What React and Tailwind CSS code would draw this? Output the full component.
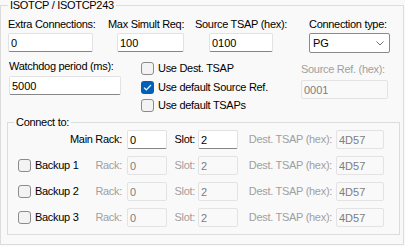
import React from "react";

// little WinForms-ish controls
function TextBox({ value, width, disabled = false }) {
  return (
    <input
      readOnly
      disabled={disabled}
      defaultValue={value}
      style={{ width }}
      className={
        disabled
          ? "h-[19px] rounded-[2px] border border-[#e3e3e3] bg-[#f9f9f9] pl-[2px] text-[11px] text-[#7d7d7d] outline-none"
          : "h-[19px] rounded-[2px] border border-[#e2e2e2] border-b-[#868686] bg-white pl-[2px] text-[11px] text-black outline-none"
      }
    />
  );
}

function CheckBox({ checked = false }) {
  if (checked) {
    return (
      <span className="flex h-[13px] w-[13px] shrink-0 items-center justify-center rounded-[3px] bg-[#005fb8]">
        <svg width="9" height="7" viewBox="0 0 9 7" fill="none">
          <path d="M1 3.6 L3.3 5.8 L8 1" stroke="white" strokeWidth="1.2" />
        </svg>
      </span>
    );
  }
  return (
    <span className="h-[13px] w-[13px] shrink-0 rounded-[3px] border border-[#8b8b8b] bg-[#f3f3f3]" />
  );
}

function CheckRow({ label, checked }) {
  return (
    <div className="flex h-[13px] items-center gap-[4px]">
      <CheckBox checked={checked} />
      <span className="leading-[13px] tracking-[-0.3px]">{label}</span>
    </div>
  );
}

function RackRow({ backup, label, enabled }) {
  const lbl = enabled ? "text-black" : "text-[#a0a0a0]";
  return (
    <div className="flex h-[19px] items-center">
      <div className="flex w-[113px] items-center justify-between pl-[4px] pr-[5px]">
        {backup ? (
          <div className="flex items-center gap-[4px]">
            <CheckBox />
            <span className="leading-[13px] tracking-[-0.3px]">{backup}</span>
          </div>
        ) : (
          <span />
        )}
        <span className={`leading-[13px] tracking-[-0.3px] ${lbl}`}>{label}</span>
      </div>
      <TextBox value="0" width={40} disabled={!enabled} />
      <div className="flex w-[31px] justify-end pr-[3px]">
        <span className={`leading-[13px] tracking-[-0.3px] ${lbl}`}>Slot:</span>
      </div>
      <TextBox value="2" width={40} disabled={!enabled} />
      <div className="flex w-[98px] justify-end pr-[4px]">
        <span className="leading-[13px] tracking-[-0.3px] text-[#a0a0a0]">Dest. TSAP (hex):</span>
      </div>
      <TextBox value="4D57" width={48} disabled />
    </div>
  );
}

export default function App() {
  return (
    <div className="h-[246px] w-[405px] overflow-hidden bg-[#f9f9f9] font-['Liberation_Sans',Arial,sans-serif] text-[11px] text-black">
      <fieldset className="w-[404px] border border-[#dcdcdc] pb-[9px] pl-[7px]">
        <legend className="px-[2px] leading-[10px] tracking-[-0.3px]">ISOTCP / ISOTCP243</legend>

        {/* top row */}
        <div className="mt-[8px] flex items-start">
          <div className="flex w-[100px] flex-col">
            <span className="leading-[13px] tracking-[-0.3px]">Extra Connections:</span>
            <div className="mt-[2px]">
              <TextBox value="0" width={85} />
            </div>
          </div>
          <div className="flex w-[87px] flex-col">
            <span className="leading-[13px] tracking-[-0.3px]">Max Simult Req:</span>
            <div className="ml-[9px] mt-[2px]">
              <TextBox value="100" width={67} />
            </div>
          </div>
          <div className="flex w-[114px] flex-col">
            <span className="leading-[13px] tracking-[-0.3px]">Source TSAP (hex):</span>
            <div className="ml-[14px] mt-[2px]">
              <TextBox value="0100" width={64} />
            </div>
          </div>
          <div className="flex flex-col">
            <span className="leading-[13px] tracking-[-0.3px]">Connection type:</span>
            <div className="mt-[2px] flex h-[20px] w-[81px] items-center justify-between rounded-[2px] border border-[#8a8a8a] bg-white pl-[3px] pr-[5px]">
              <span>PG</span>
              <svg width="8" height="5" viewBox="0 0 8 5" fill="none">
                <path d="M0.5 0.5 L4 4 L7.5 0.5" stroke="#5c5c5c" strokeWidth="0.9" />
              </svg>
            </div>
          </div>
        </div>

        {/* second row */}
        <div className="mt-[7px] flex items-start">
          <div className="ml-[1px] flex w-[132px] flex-col">
            <span className="leading-[13px] tracking-[-0.3px]">Watchdog period (ms):</span>
            <div className="mt-[3px]">
              <TextBox value="5000" width={112} />
            </div>
          </div>
          <div className="mt-[2px] flex w-[160px] flex-col">
            <CheckRow label="Use Dest. TSAP" />
            <div className="mt-[6px]">
              <CheckRow label="Use default Source Ref." checked />
            </div>
            <div className="mt-[5px]">
              <CheckRow label="Use default TSAPs" />
            </div>
          </div>
          <div className="mt-[3px] flex flex-col">
            <span className="leading-[13px] tracking-[-0.3px] text-[#a0a0a0]">Source Ref. (hex):</span>
            <div className="mt-[4px]">
              <TextBox value="0001" width={87} disabled />
            </div>
          </div>
        </div>

        {/* connect to */}
        <fieldset className="-ml-[1px] mt-[6px] w-[393px] border border-[#dcdcdc] pb-[7px] pl-[6px]">
          <legend className="px-[2px] leading-[8px] tracking-[-0.3px]">Connect to:</legend>
          <div className="mt-[4px] flex flex-col gap-[7px]">
            <RackRow label="Main Rack:" enabled />
            <RackRow backup="Backup 1" label="Rack:" />
            <RackRow backup="Backup 2" label="Rack:" />
            <RackRow backup="Backup 3" label="Rack:" />
          </div>
        </fieldset>
      </fieldset>
    </div>
  );
}
